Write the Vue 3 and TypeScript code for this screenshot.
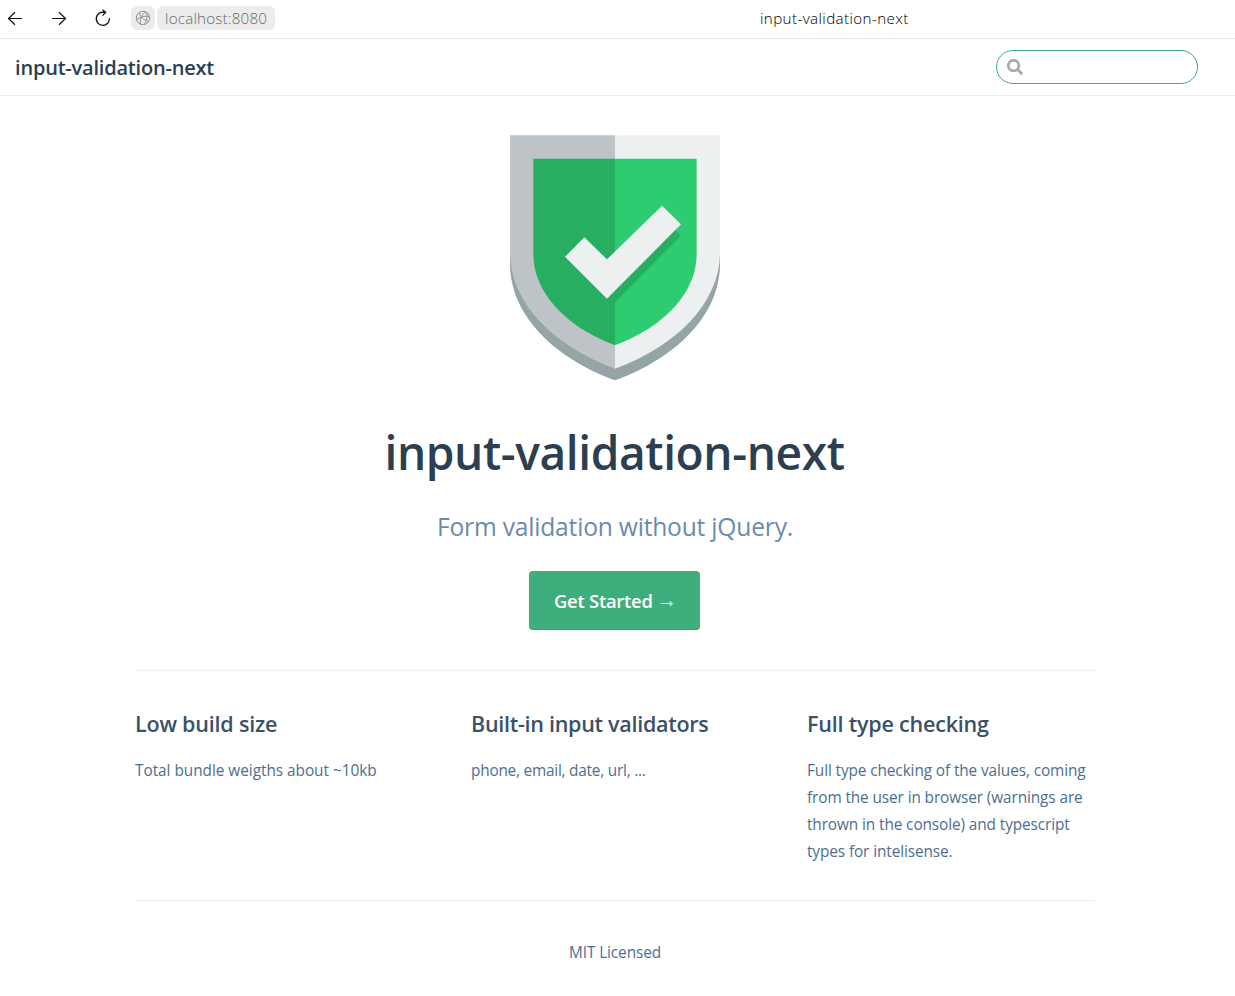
<script setup lang="ts">
interface Feature {
  title: string
  details: string
  tone: string
}

const name = 'input-validation-next'
const features: Feature[] = [
  { title: 'Low build size', details: 'Total bundle weigths about ~10kb', tone: 'size' },
  { title: 'Built-in input validators', details: 'phone, email, date, url, ...', tone: 'validators' },
  {
    title: 'Full type checking',
    details:
      'Full type checking of the values, coming from the user in browser (warnings are thrown in the console) and typescript types for intelisense.',
    tone: 'types',
  },
]
</script>

<template>
  <div class="page">
    <div class="browser">
      <div class="controls">
        <svg class="nav" viewBox="0 0 16 16"><path d="M1.5 8.5H15M8 2.2 1.5 8.5 8 14.8" /></svg>
        <svg class="nav" viewBox="0 0 16 16"><path d="M1 8.5h13.5M8 2.2 14.5 8.5 8 14.8" /></svg>
        <svg class="reload" viewBox="0 0 16 18"><path d="M14.4 9.2A6.6 6.6 0 1 1 9.4 3.4M6.6 3.4h4M7.6.8 10.6 3.4 7.6 6.6" /></svg>
        <span class="site">
          <svg viewBox="0 0 16 16">
            <circle cx="8" cy="8" r="6.7" />
            <path d="M11 2C7 3.6 4.6 8.6 5.4 14.1M11 2C13 5.8 12 10.6 9.2 14.5M4.6 2.4C5 6.4 8.8 10.2 13.6 11.4M1.5 9.9C5 7 9.8 5.6 14.3 6.6" />
          </svg>
        </span>
        <span class="address"><span>localhost:8080</span></span>
      </div>
      <span class="tab-title">{{ name }}</span>
    </div>

    <header class="navbar">
      <span class="site-name">{{ name }}</span>
      <div class="search">
        <svg viewBox="0 0 16 16"><circle cx="6.6" cy="6.6" r="5.3" /><path d="m10.3 10.3 4.9 4.9" /></svg>
      </div>
    </header>

    <main class="home">
      <section class="hero">
        <svg class="shield" viewBox="0 -0.03 18 21">
          <path fill="#95a5a6" d="M0 10v1c0 4.3 3.6 8 9 10 5.4-2 9-5.7 9-10v-1z" />
          <path fill="#bdc3c7" d="M0 0h9v20c-5.4-2-9-5.7-9-10z" />
          <path fill="#ecf0f1" d="M9 0h9v10c0 4.3-3.6 8-9 10z" />
          <path fill="#27ae60" d="M2 2h7v16c-4.3-1.6-7-4.6-7-7.8z" />
          <path fill="#2ecc71" d="M9 2h7v8.2c0 3.2-2.7 6.2-7 7.8z" />
          <path fill="#27ae60" d="M9 13v1.3l5.66-5.7-.5-.5z" />
          <path fill="#ecf0f1" d="m4.71 10.41 1.66-1.67 1.94 1.89 4.72-4.6 1.63 1.6L8.31 14z" />
        </svg>
        <h1>{{ name }}</h1>
        <p class="description"><span>Form validation without jQuery.</span></p>
        <a class="action"><span>Get Started</span><span class="arrow">→</span></a>
      </section>

      <section class="features">
        <article v-for="f in features" :key="f.title" :class="f.tone">
          <h2>{{ f.title }}</h2>
          <p>{{ f.details }}</p>
        </article>
      </section>
      <footer><span>MIT Licensed</span></footer>
    </main>
  </div>
</template>

<style>
body { margin: 0; background: #fff; }
</style>

<style scoped>
* { box-sizing: border-box; }
.page {
  width: 1235px;
  height: 996px;
  overflow: hidden;
  background: #fff;
  color: #2c3e50;
  font-family: "Open Sans", "Noto Sans", sans-serif;
}
.browser {
  height: 39px;
  border-bottom: 1px solid #e5e5e5;
  display: grid;
  grid-template-columns: 760px 1fr;
  align-items: start;
}
.controls { display: flex; align-items: center; padding-left: 7px; height: 36px; }
.nav { width: 16px; height: 16px; margin-right: 28px; fill: none; stroke: #111; stroke-width: 1.2; }
.reload { width: 16px; height: 18px; fill: none; stroke: #111; stroke-width: 1.3; }
.site {
  width: 24px; height: 24px; margin-left: 20px; background: #ececec; border-radius: 6px;
  display: flex; align-items: center; justify-content: center;
}
.site svg { width: 16px; height: 16px; fill: none; stroke: #888; stroke-width: 0.9; }
.address {
  width: 118px; height: 24px; margin-left: 2px; padding-left: 8px; border-radius: 6px;
  background: #ececec; color: #666; font-size: 15.2px; line-height: 24px; font-weight: 300;
  white-space: nowrap; letter-spacing: 0.2px;
}
.tab-title { font-size: 15.2px; line-height: 36px; color: #000; font-weight: 300; letter-spacing: 0.39px; white-space: nowrap; }
.navbar {
  height: 57px; border-bottom: 1px solid #eaecef; padding: 0 37px 0 15px;
  display: flex; align-items: center; justify-content: space-between;
}
.site-name { font-size: 20px; line-height: 35px; font-weight: 600; letter-spacing: -0.2px; }
.search {
  width: 202px; height: 34px; border: 1px solid #3eaf7c; border-radius: 17px;
  display: flex; align-items: center; padding-left: 10px;
}
.search svg { width: 16px; height: 16px; fill: none; stroke: #aaa; stroke-width: 2.7; }
.home { width: 960px; margin: 0 0 0 135px; }
.hero { display: flex; flex-direction: column; align-items: center; padding-top: 39px; height: 574px; }
.shield { width: 210px; height: 245px; display: block; flex: none; }
h1 { font-size: 46.1px; line-height: 60px; margin: 43px 1px 0 0; font-weight: 600; letter-spacing: -0.4px; white-space: nowrap; }
.description { font-size: 24.6px; line-height: 34px; margin: 27px 0 0; color: #6a8bad; letter-spacing: -0.2px; white-space: nowrap; }
.action {
  width: 171px; height: 59px; margin: 27px 1px 0 0; background: #3eaf7c; border-radius: 4px;
  border-bottom: 1px solid #389d70; color: #fff; font-size: 18.4px; font-weight: 600;
  display: flex; align-items: center; padding: 1px 0 0 25px; letter-spacing: -0.24px; white-space: nowrap;
}
.arrow { font-family: "Liberation Sans", sans-serif; font-weight: 400; font-size: 20px; line-height: 24px; margin: 0 0 2px 4px; letter-spacing: 0; }
.features {
  border-top: 1px solid #eaecef; height: 230px; padding-top: 35px;
  display: grid; grid-template-columns: 288px 288px 288px; column-gap: 48px;
}
h2 { font-size: 21.5px; line-height: 36px; margin: 0; font-weight: 600; color: #3a5169; letter-spacing: -0.2px; white-space: nowrap; }
.validators h2 { letter-spacing: -0.28px; }
.features p { font-size: 15.36px; line-height: 27px; margin: 15px 0 0; color: #4e6e8e; letter-spacing: -0.1px; }
.features .size p { letter-spacing: -0.03px; }
.features .validators p { letter-spacing: -0.22px; }
footer { border-top: 1px solid #eaecef; padding-top: 38px; text-align: center; font-size: 15.36px; line-height: 27px; color: #4e6e8e; letter-spacing: -0.1px; }
</style>
